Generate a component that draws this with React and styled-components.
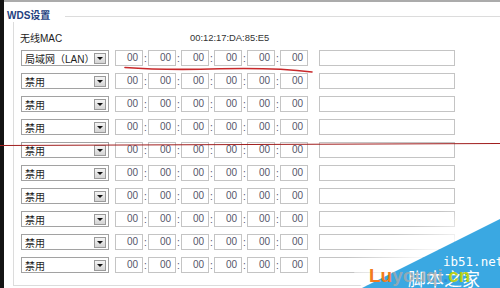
import React from "react";
import styled, { createGlobalStyle } from "styled-components";

const Global = createGlobalStyle`
  html, body { margin: 0; padding: 0; background: #fff; }
  body { font-family: "Liberation Sans", "Noto Sans CJK SC", sans-serif; }
`;

const Page = styled.div`
  position: relative;
  width: 500px;
  height: 288px;
  overflow: hidden;
  display: flex;
  background: #fff;
`;

const BlackStrip = styled.div`
  width: 4px;
  flex: none;
  background: #141414;
`;

const Main = styled.div`
  flex: 1;
  display: flex;
  flex-direction: column;
  min-width: 0;
`;

const TopBar = styled.div`
  height: 2px;
  background: #ababab;
`;

const Header = styled.div`
  display: flex;
  align-items: center;
  padding: 8px 0 0 3px;
  height: 12px;
`;

const Title = styled.div`
  font-size: 10px;
  line-height: 12px;
  font-weight: bold;
  color: #23407e;
  white-space: nowrap;
`;

const Rule = styled.div`
  flex: 1;
  height: 1px;
  margin-left: 15px;
  background: #dcdcdc;
`;

const Panel = styled.div`
  margin-left: 9px;
  border-left: 1px solid #dcdcdc;
  border-bottom: 1px solid #dcdcdc;
  padding: 8px 0 12px 6px;
  display: flex;
  flex-direction: column;
  gap: 7px;
`;

const MacRow = styled.div`
  display: flex;
  height: 14px;
  align-items: center;
  font-size: 10px;
  color: #222;
  margin-bottom: -1px;
`;

const MacLabel = styled.span`
  width: 170px;
`;

const MacValue = styled.span`
  font-size: 9.4px;
  color: #333;
`;

const Row = styled.div`
  display: flex;
  align-items: center;
  height: 16px;
  padding-left: 1px;
`;

const Select = styled.div`
  box-sizing: border-box;
  width: 88px;
  height: 16px;
  border: 1px solid #a2a2a2;
  background: #fff;
  display: flex;
  align-items: center;
  justify-content: space-between;
  padding: 0 2px 0 3px;
  font-size: 10px;
  color: #1e1e1e;
  margin-right: 6px;
`;

const Arrow = styled.div`
  box-sizing: border-box;
  width: 12px;
  height: 11px;
  border: 1px solid #9a9a9a;
  background: linear-gradient(#f4f4f4, #d4d4d4);
  display: flex;
  align-items: center;
  justify-content: center;
  &::after {
    content: "";
    border-left: 3px solid transparent;
    border-right: 3px solid transparent;
    border-top: 3px solid #111;
  }
`;

const Octet = styled.div`
  box-sizing: border-box;
  width: 28px;
  height: 16px;
  border: 1px solid #c4c4c4;
  background: #fff;
  font-size: 10px;
  line-height: 14px;
  text-align: right;
  padding-right: 4px;
  color: #56566a;
`;

const Colon = styled.span`
  width: 5px;
  font-size: 10px;
  color: #56566a;
  text-align: center;
`;

const NameInput = styled.div`
  box-sizing: border-box;
  width: 136px;
  height: 16px;
  border: 1px solid #c4c4c4;
  background: #fff;
  margin-left: ${(p) => p.$gap}px;
`;

const Overlay = styled.svg`
  position: absolute;
  left: 0;
  top: 0;
  z-index: 1;
  pointer-events: none;
`;

/* white haze band lying just above the watermark's diagonal edge */
const Haze = styled.div`
  position: absolute;
  left: 362px;
  top: 288px;
  width: 220px;
  height: 34px;
  transform-origin: 0 0;
  transform: rotate(-26.57deg) translateY(-34px);
  background: linear-gradient(to top, rgba(255,255,255,0.9), rgba(255,255,255,0));
  z-index: 2;
`;

/* blue diagonal watermark corner */
const Watermark = styled.div`
  position: absolute;
  left: 362px;
  top: 288px;
  width: 220px;
  height: 160px;
  transform-origin: 0 0;
  transform: rotate(-26.57deg);
  background: rgb(58, 168, 226);
  z-index: 3;
`;

const WmText = styled.span`
  position: absolute;
  z-index: 4;
  white-space: nowrap;
  line-height: 1;
  left: ${(p) => p.$x}px;
  top: ${(p) => p.$y}px;
  font-size: ${(p) => p.$size}px;
  font-family: ${(p) => p.$font};
  font-weight: ${(p) => (p.$bold ? "bold" : "normal")};
  color: ${(p) => p.$color};
`;

const Tone = styled.span`
  color: ${(p) => p.$color};
`;

const modes = ["局域网（LAN）", ...Array(9).fill("禁用")];

function MacFields() {
  const out = [];
  for (let i = 0; i < 6; i++) {
    out.push(<Octet key={"o" + i}>00</Octet>);
    if (i < 5) out.push(<Colon key={"c" + i}>:</Colon>);
  }
  return out;
}

export default function App() {
  return (
    <>
      <Global />
      <Page>
        <BlackStrip />
        <Main>
          <TopBar />
          <Header>
            <Title>WDS设置</Title>
            <Rule />
          </Header>
          <Panel>
            <MacRow>
              <MacLabel>无线MAC</MacLabel>
              <MacValue>00:12:17:DA:85:E5</MacValue>
            </MacRow>
            {modes.map((m, i) => (
              <Row key={i}>
                <Select>
                  <span>{m}</span>
                  <Arrow />
                </Select>
                <MacFields />
                <NameInput $gap={11} />
              </Row>
            ))}
          </Panel>
        </Main>
        <Overlay width="500" height="288" viewBox="0 0 500 288">
          <path d="M125 67.5 Q165 70.5 220 68.8 Q275 67.5 312 72" fill="none" stroke="#c8292b" strokeWidth="1.6" strokeLinecap="round" />
          <line x1="0" y1="145.5" x2="500" y2="143.5" stroke="#a01e1e" strokeWidth="1.2" />
        </Overlay>
        <Haze />
        <Watermark />
        <WmText $x={443} $y={256} $size={12.5} $font='"DejaVu Sans Mono", monospace' $color="#ffffff">ib51.net</WmText>
        <WmText $x={408} $y={269} $size={18} $font='"Noto Sans CJK SC", sans-serif' $color="#ffffff">脚本之家</WmText>
        <WmText $x={369} $y={266} $size={19} $bold $font='"Liberation Sans", sans-serif' $color="#f27c1e">
          Lu<Tone $color="rgba(170,170,170,0.75)">youqi</Tone><Tone $color="#2f8fd8">.</Tone><Tone $color="#b9d11c">cn</Tone>
        </WmText>
      </Page>
    </>
  );
}
